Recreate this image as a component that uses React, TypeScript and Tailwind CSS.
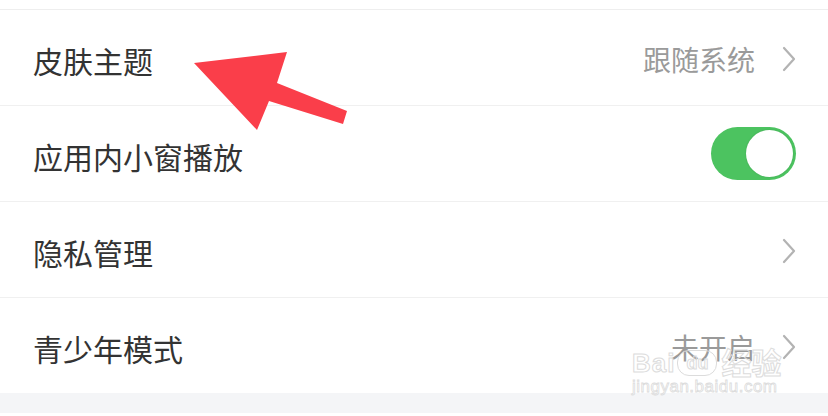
import React from 'react';

const rows = [
  { label: '皮肤主题', value: '跟随系统', kind: 'link' },
  { label: '应用内小窗播放', kind: 'switch' },
  { label: '隐私管理', kind: 'link' },
  { label: '青少年模式', value: '未开启', kind: 'link' },
];

function Chevron() {
  return (
    <svg width="14" height="26" viewBox="0 0 14 26" className="ml-[27px]">
      <path d="M2 2 L12 13 L2 24" fill="none" stroke="#b3b3b3" strokeWidth="2.2" strokeLinecap="round" strokeLinejoin="round" />
    </svg>
  );
}

export default function App() {
  return (
    <div className="relative w-[828px] h-[416px] overflow-hidden bg-white font-['Noto_Sans_CJK_SC',sans-serif]">
      <div className="h-[9px]" />
      <div className="border-t border-[#eeeeee]">
        {rows.map((row, i) => (
          <div
            key={row.label}
            className={`flex items-center pl-[33px] pr-[32px] ${i < rows.length - 1 ? 'h-[96px] border-b border-[#f0f0f0]' : 'h-[95px]'}`}
          >
            <span className="flex-1 text-[30px] leading-none text-[#333333] pt-[4px]">{row.label}</span>
            {row.kind === 'switch' ? (
              <div className="w-[85px] h-[53px] rounded-full bg-[#4cc360] flex items-center justify-end pr-[3px]">
                <div className="w-[47px] h-[47px] rounded-full bg-white shadow-[0_0_2px_rgba(0,0,0,0.15)]" />
              </div>
            ) : (
              <div className="flex items-center pt-[2px]">
                {row.value && <span className="text-[28px] leading-none text-[#9a9a9a]">{row.value}</span>}
                <Chevron />
              </div>
            )}
          </div>
        ))}
      </div>
      <div className="h-[20px] bg-[#f4f5f7]" />

      {/* red annotation arrow */}
      <svg className="absolute left-0 top-0" width="828" height="416" viewBox="0 0 828 416">
        <polygon points="194,63 287,52 277,83 347,111 343,124 269,101 257,130" fill="#fa3e4a" />
      </svg>

      {/* watermark */}
      <div className="absolute left-[632px] top-[346px] flex flex-col items-start pointer-events-none">
        <div className="flex items-end gap-[2px] leading-none">
          <span className="text-[26px] font-bold tracking-[1px] text-transparent [-webkit-text-stroke:1px_#dcdcdc] font-['Liberation_Sans',sans-serif]">Bai</span>
          <span className="w-[40px] h-[26px] rounded-[12px] border border-[#dcdcdc] flex items-center justify-center text-[18px] font-bold text-transparent [-webkit-text-stroke:1px_#dcdcdc] font-['Liberation_Sans',sans-serif]">du</span>
          <span className="text-[30px] font-bold text-transparent [-webkit-text-stroke:1px_#dcdcdc] ml-[2px]">经验</span>
        </div>
        <span className="mt-[2px] text-[17px] leading-none tracking-[0.5px] text-transparent [-webkit-text-stroke:0.8px_#dcdcdc] font-['Liberation_Sans',sans-serif]">jingyan.baidu.com</span>
      </div>
    </div>
  );
}
